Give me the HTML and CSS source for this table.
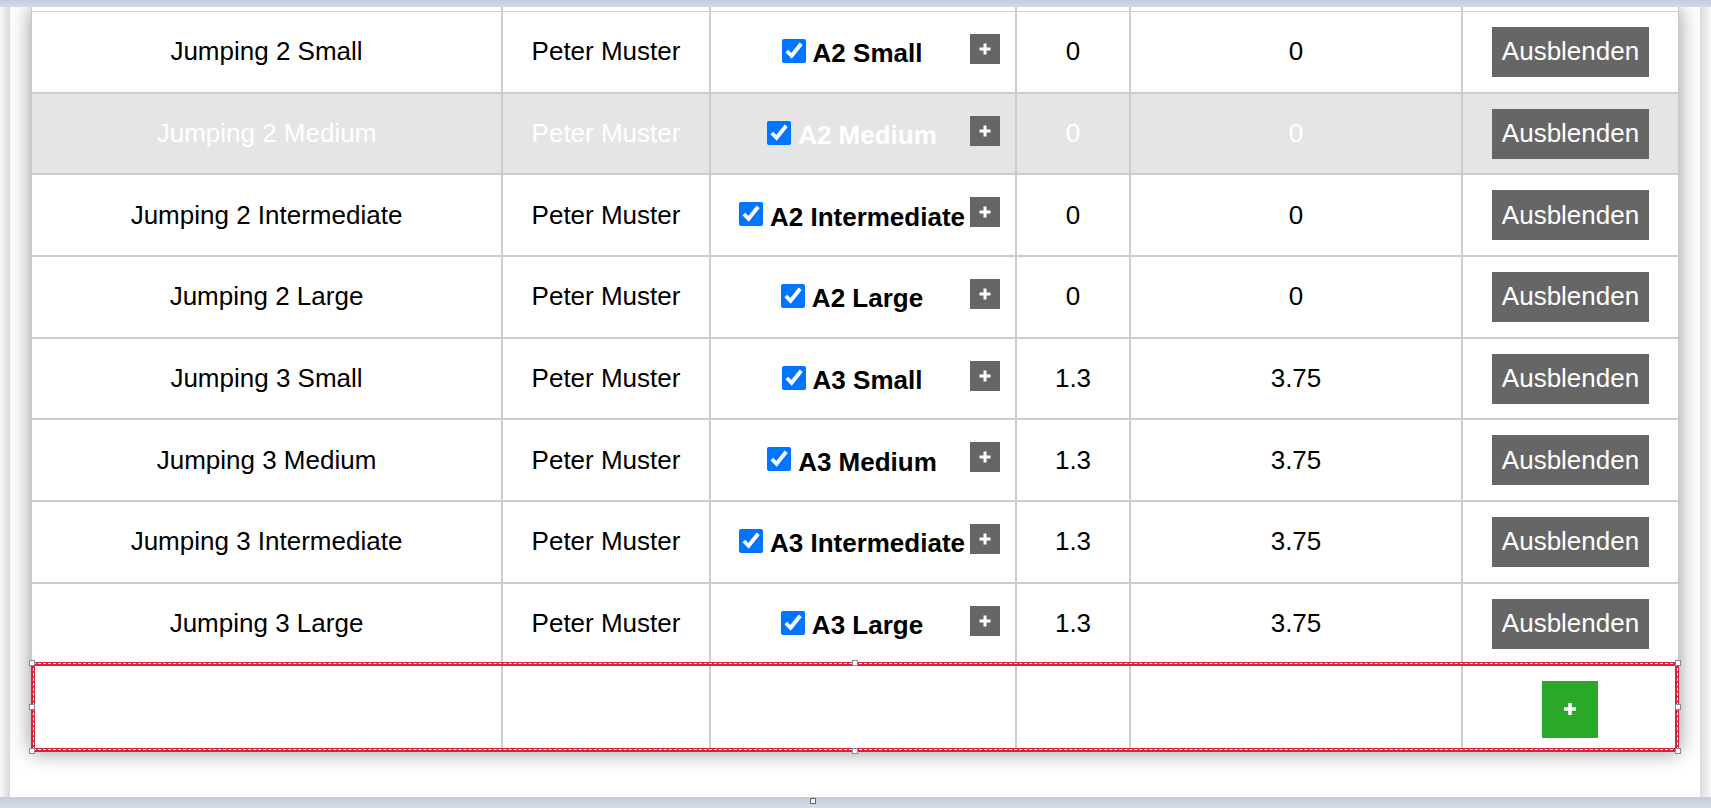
FILE: index.html
```html
<!DOCTYPE html>
<html lang="de">
<head>
<meta charset="utf-8">
<title>Prüfungen</title>
<link rel="stylesheet" href="styles.css">
</head>
<body>
<div class="topbar"></div>
<div class="workspace">
  <div class="frame frame-left"></div>
  <main class="canvas">
    <div class="grid">
      <div class="row stub">
        <div class="cell"></div><div class="cell"></div><div class="cell"></div><div class="cell"></div><div class="cell"></div><div class="cell"></div>
      </div>

      <div class="row">
        <div class="cell">Jumping 2 Small</div>
        <div class="cell">Peter Muster</div>
        <div class="cell cell-opt"><label class="opt"><input type="checkbox" checked><span>A2 Small</span></label><button class="btn-plus"><svg viewBox="0 0 12 12" width="12" height="12"><path d="M6 .5v11M.5 6h11" stroke="#fff" stroke-width="3"/></svg></button></div>
        <div class="cell">0</div>
        <div class="cell">0</div>
        <div class="cell"><button class="btn-hide">Ausblenden</button></div>
      </div>

      <div class="row off">
        <div class="cell">Jumping 2 Medium</div>
        <div class="cell">Peter Muster</div>
        <div class="cell cell-opt"><label class="opt"><input type="checkbox" checked><span>A2 Medium</span></label><button class="btn-plus"><svg viewBox="0 0 12 12" width="12" height="12"><path d="M6 .5v11M.5 6h11" stroke="#fff" stroke-width="3"/></svg></button></div>
        <div class="cell">0</div>
        <div class="cell">0</div>
        <div class="cell"><button class="btn-hide">Ausblenden</button></div>
      </div>

      <div class="row">
        <div class="cell">Jumping 2 Intermediate</div>
        <div class="cell">Peter Muster</div>
        <div class="cell cell-opt"><label class="opt"><input type="checkbox" checked><span>A2 Intermediate</span></label><button class="btn-plus"><svg viewBox="0 0 12 12" width="12" height="12"><path d="M6 .5v11M.5 6h11" stroke="#fff" stroke-width="3"/></svg></button></div>
        <div class="cell">0</div>
        <div class="cell">0</div>
        <div class="cell"><button class="btn-hide">Ausblenden</button></div>
      </div>

      <div class="row">
        <div class="cell">Jumping 2 Large</div>
        <div class="cell">Peter Muster</div>
        <div class="cell cell-opt"><label class="opt"><input type="checkbox" checked><span>A2 Large</span></label><button class="btn-plus"><svg viewBox="0 0 12 12" width="12" height="12"><path d="M6 .5v11M.5 6h11" stroke="#fff" stroke-width="3"/></svg></button></div>
        <div class="cell">0</div>
        <div class="cell">0</div>
        <div class="cell"><button class="btn-hide">Ausblenden</button></div>
      </div>

      <div class="row">
        <div class="cell">Jumping 3 Small</div>
        <div class="cell">Peter Muster</div>
        <div class="cell cell-opt"><label class="opt"><input type="checkbox" checked><span>A3 Small</span></label><button class="btn-plus"><svg viewBox="0 0 12 12" width="12" height="12"><path d="M6 .5v11M.5 6h11" stroke="#fff" stroke-width="3"/></svg></button></div>
        <div class="cell">1.3</div>
        <div class="cell">3.75</div>
        <div class="cell"><button class="btn-hide">Ausblenden</button></div>
      </div>

      <div class="row">
        <div class="cell">Jumping 3 Medium</div>
        <div class="cell">Peter Muster</div>
        <div class="cell cell-opt"><label class="opt"><input type="checkbox" checked><span>A3 Medium</span></label><button class="btn-plus"><svg viewBox="0 0 12 12" width="12" height="12"><path d="M6 .5v11M.5 6h11" stroke="#fff" stroke-width="3"/></svg></button></div>
        <div class="cell">1.3</div>
        <div class="cell">3.75</div>
        <div class="cell"><button class="btn-hide">Ausblenden</button></div>
      </div>

      <div class="row">
        <div class="cell">Jumping 3 Intermediate</div>
        <div class="cell">Peter Muster</div>
        <div class="cell cell-opt"><label class="opt"><input type="checkbox" checked><span>A3 Intermediate</span></label><button class="btn-plus"><svg viewBox="0 0 12 12" width="12" height="12"><path d="M6 .5v11M.5 6h11" stroke="#fff" stroke-width="3"/></svg></button></div>
        <div class="cell">1.3</div>
        <div class="cell">3.75</div>
        <div class="cell"><button class="btn-hide">Ausblenden</button></div>
      </div>

      <div class="row">
        <div class="cell">Jumping 3 Large</div>
        <div class="cell">Peter Muster</div>
        <div class="cell cell-opt"><label class="opt"><input type="checkbox" checked><span>A3 Large</span></label><button class="btn-plus"><svg viewBox="0 0 12 12" width="12" height="12"><path d="M6 .5v11M.5 6h11" stroke="#fff" stroke-width="3"/></svg></button></div>
        <div class="cell">1.3</div>
        <div class="cell">3.75</div>
        <div class="cell"><button class="btn-hide">Ausblenden</button></div>
      </div>

      <div class="row add-row">
        <div class="cell"></div>
        <div class="cell"></div>
        <div class="cell"></div>
        <div class="cell"></div>
        <div class="cell"></div>
        <div class="cell"><button class="btn-add"><svg viewBox="0 0 14 14" width="14" height="14"><path d="M7 1v12M1 7h12" stroke="#fff" stroke-width="3.5"/></svg></button></div>
        <div class="selection">
          <span class="handle h-tl"></span><span class="handle h-tm"></span><span class="handle h-tr"></span>
          <span class="handle h-ml"></span><span class="handle h-mr"></span>
          <span class="handle h-bl"></span><span class="handle h-bm"></span><span class="handle h-br"></span>
        </div>
      </div>
    </div>
  </main>
  <div class="frame frame-right"></div>
</div>
<div class="bottombar"><span class="bar-handle"></span></div>
</body>
</html>
```
FILE: styles.css
```css
* { box-sizing: border-box; }

html, body {
  margin: 0;
  height: 808px;
  overflow: hidden;
}

body {
  font-family: "Liberation Sans", Arial, sans-serif;
  background: #fff;
  display: flex;
  flex-direction: column;
}

.topbar {
  flex: none;
  height: 7px;
  background: linear-gradient(#c3cddd, #d3dae6);
}

.workspace {
  flex: 1;
  display: flex;
  min-height: 0;
}

.frame-left {
  width: 10px;
  background: linear-gradient(to right, #f8f8f8, #dadada);
}

.frame-right {
  width: 11px;
  background: linear-gradient(to right, #dcdcdc, #f8f8f8);
}

.canvas {
  flex: 1;
  background: #fff;
  padding: 0 21px;
  overflow: hidden;
}

.grid {
  background: #fff;
  border-left: 1px solid #c8c8c8;
  border-right: 1px solid #c8c8c8;
  box-shadow: 0 0 20px rgba(0, 0, 0, 0.42);
}

.row {
  display: grid;
  grid-template-columns: 471px 208px 306px 114px 332px 215px;
  height: 81.7px;
  border-bottom: 2px solid #cccccc;
}

.row.stub {
  height: 5px;
  border-bottom: 1px solid #dacfc4;
}

.cell {
  display: flex;
  align-items: center;
  justify-content: center;
  border-right: 2px solid #cccccc;
  font-size: 26px;
  color: #000;
  white-space: nowrap;
}

.cell:last-child { border-right: none; }

.row.off { background: #e5e5e5; }
.row.off .cell { color: #fff; }

.cell-opt {
  justify-content: flex-start;
  padding: 0 15px 0 23px;
}

.opt {
  flex: 1;
  display: flex;
  align-items: center;
  justify-content: center;
  margin-top: 4px;
  font-weight: bold;
}

.opt input {
  width: 24px;
  height: 24px;
  margin: 0 7px 6px 0;
}

.btn-plus {
  flex: none;
  width: 30px;
  height: 30px;
  margin-bottom: 6px;
  padding: 0;
  border: 0;
  background: #666;
  display: flex;
  align-items: center;
  justify-content: center;
}

.btn-hide {
  height: 50px;
  padding: 0 10px;
  border: 0;
  border-radius: 0;
  background: #666;
  color: #fff;
  font: 26px "Liberation Sans", Arial, sans-serif;
}

.add-row {
  position: relative;
  height: 86px;
  border-bottom: none;
}

.btn-add {
  width: 56px;
  height: 57px;
  margin-top: 1px;
  padding: 0;
  border: 0;
  background: #29a829;
  display: flex;
  align-items: center;
  justify-content: center;
}

.selection {
  position: absolute;
  top: -4px;
  left: -1px;
  right: -1px;
  bottom: 0;
  border: 4px solid #d2243d;
  pointer-events: none;
}

.selection::after {
  content: "";
  position: absolute;
  inset: -2.5px;
  border: 1px dashed #fff;
}

.handle {
  position: absolute;
  width: 6px;
  height: 6px;
  background: #fff;
  border: 1px solid #8a8a8a;
  z-index: 1;
}

.h-tl { left: -6px; top: -6px; }
.h-tm { left: 50%; top: -6px; margin-left: -3px; }
.h-tr { right: -6px; top: -6px; }
.h-ml { left: -6px; top: 50%; margin-top: -3px; }
.h-mr { right: -6px; top: 50%; margin-top: -3px; }
.h-bl { left: -6px; bottom: -6px; }
.h-bm { left: 50%; bottom: -6px; margin-left: -3px; }
.h-br { right: -6px; bottom: -6px; }

.bottombar {
  flex: none;
  position: relative;
  height: 11px;
  background: linear-gradient(#c2ccdd, #d6dde9);
}

.bar-handle {
  position: absolute;
  left: 810px;
  top: 1px;
  width: 6px;
  height: 6px;
  background: #fff;
  border: 1px solid #666;
}
```
